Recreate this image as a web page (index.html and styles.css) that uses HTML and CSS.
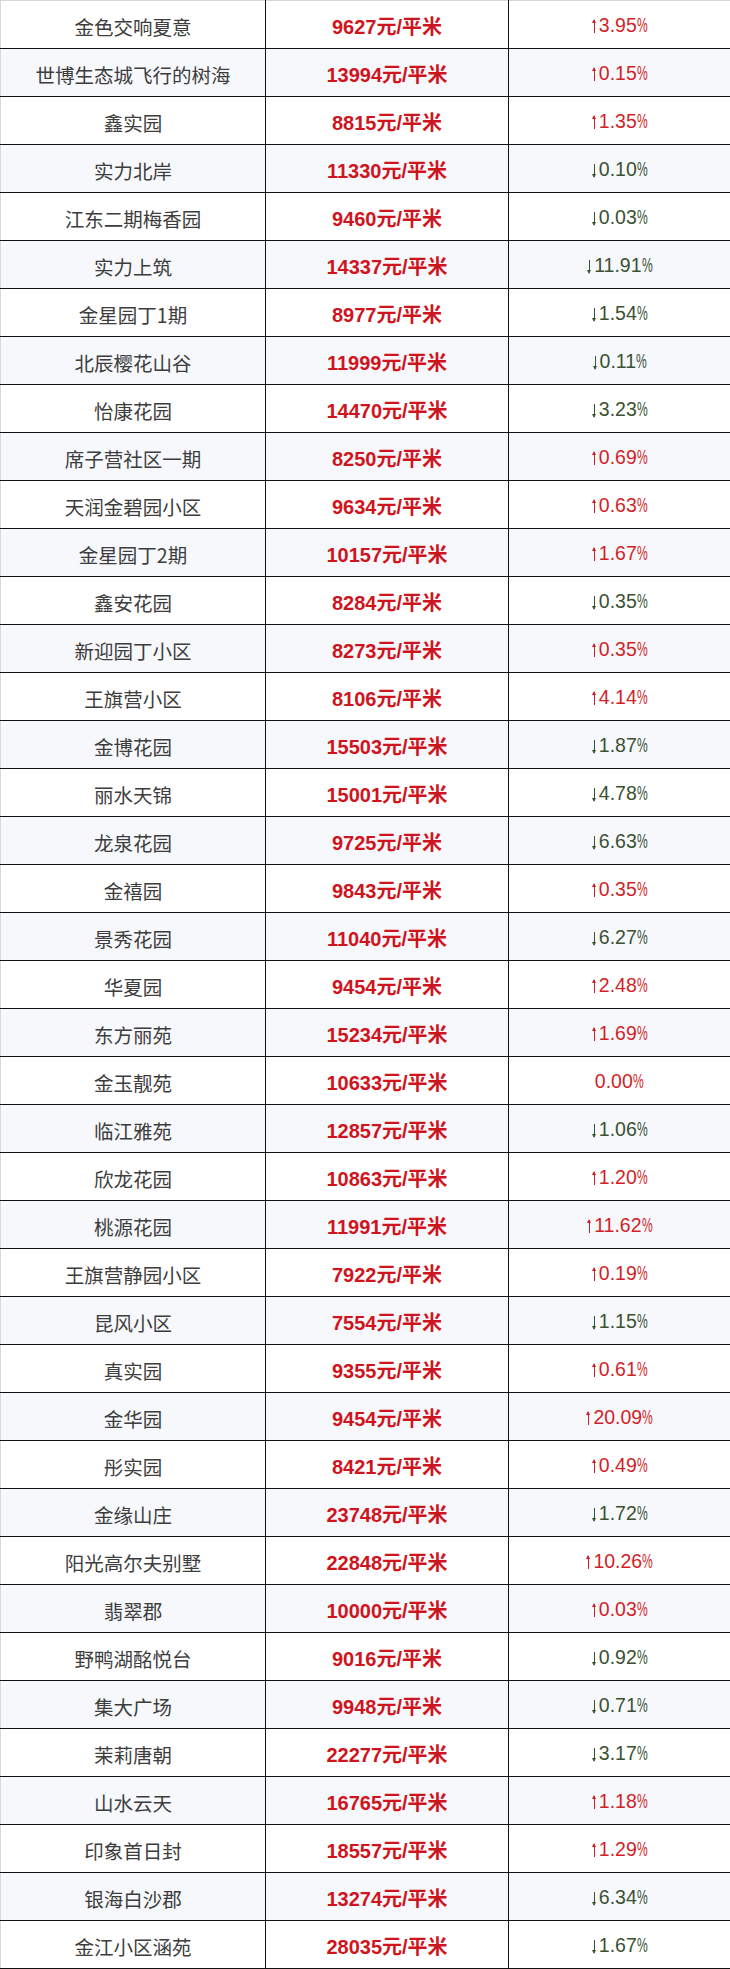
FILE: index.html
```html
<!DOCTYPE html>
<html lang="zh-CN">
<head>
<meta charset="utf-8">
<title>小区房价</title>
<link rel="stylesheet" href="styles.css">
</head>
<body>
<table class="prices">
<colgroup><col class="c-name"><col class="c-price"><col class="c-chg"></colgroup>
<tbody>
<tr><td class="name">金色交响夏意</td><td class="price">9627元/平米</td><td class="chg up"><i class="ar"></i>3.95<span class="pct">%</span></td></tr>
<tr><td class="name">世博生态城飞行的树海</td><td class="price">13994元/平米</td><td class="chg up"><i class="ar"></i>0.15<span class="pct">%</span></td></tr>
<tr><td class="name">鑫实园</td><td class="price">8815元/平米</td><td class="chg up"><i class="ar"></i>1.35<span class="pct">%</span></td></tr>
<tr><td class="name">实力北岸</td><td class="price">11330元/平米</td><td class="chg down"><i class="ar"></i>0.10<span class="pct">%</span></td></tr>
<tr><td class="name">江东二期梅香园</td><td class="price">9460元/平米</td><td class="chg down"><i class="ar"></i>0.03<span class="pct">%</span></td></tr>
<tr><td class="name">实力上筑</td><td class="price">14337元/平米</td><td class="chg down"><i class="ar"></i>11.91<span class="pct">%</span></td></tr>
<tr><td class="name">金星园丁1期</td><td class="price">8977元/平米</td><td class="chg down"><i class="ar"></i>1.54<span class="pct">%</span></td></tr>
<tr><td class="name">北辰樱花山谷</td><td class="price">11999元/平米</td><td class="chg down"><i class="ar"></i>0.11<span class="pct">%</span></td></tr>
<tr><td class="name">怡康花园</td><td class="price">14470元/平米</td><td class="chg down"><i class="ar"></i>3.23<span class="pct">%</span></td></tr>
<tr><td class="name">席子营社区一期</td><td class="price">8250元/平米</td><td class="chg up"><i class="ar"></i>0.69<span class="pct">%</span></td></tr>
<tr><td class="name">天润金碧园小区</td><td class="price">9634元/平米</td><td class="chg up"><i class="ar"></i>0.63<span class="pct">%</span></td></tr>
<tr><td class="name">金星园丁2期</td><td class="price">10157元/平米</td><td class="chg up"><i class="ar"></i>1.67<span class="pct">%</span></td></tr>
<tr><td class="name">鑫安花园</td><td class="price">8284元/平米</td><td class="chg down"><i class="ar"></i>0.35<span class="pct">%</span></td></tr>
<tr><td class="name">新迎园丁小区</td><td class="price">8273元/平米</td><td class="chg up"><i class="ar"></i>0.35<span class="pct">%</span></td></tr>
<tr><td class="name">王旗营小区</td><td class="price">8106元/平米</td><td class="chg up"><i class="ar"></i>4.14<span class="pct">%</span></td></tr>
<tr><td class="name">金博花园</td><td class="price">15503元/平米</td><td class="chg down"><i class="ar"></i>1.87<span class="pct">%</span></td></tr>
<tr><td class="name">丽水天锦</td><td class="price">15001元/平米</td><td class="chg down"><i class="ar"></i>4.78<span class="pct">%</span></td></tr>
<tr><td class="name">龙泉花园</td><td class="price">9725元/平米</td><td class="chg down"><i class="ar"></i>6.63<span class="pct">%</span></td></tr>
<tr><td class="name">金禧园</td><td class="price">9843元/平米</td><td class="chg up"><i class="ar"></i>0.35<span class="pct">%</span></td></tr>
<tr><td class="name">景秀花园</td><td class="price">11040元/平米</td><td class="chg down"><i class="ar"></i>6.27<span class="pct">%</span></td></tr>
<tr><td class="name">华夏园</td><td class="price">9454元/平米</td><td class="chg up"><i class="ar"></i>2.48<span class="pct">%</span></td></tr>
<tr><td class="name">东方丽苑</td><td class="price">15234元/平米</td><td class="chg up"><i class="ar"></i>1.69<span class="pct">%</span></td></tr>
<tr><td class="name">金玉靓苑</td><td class="price">10633元/平米</td><td class="chg flat">0.00<span class="pct">%</span></td></tr>
<tr><td class="name">临江雅苑</td><td class="price">12857元/平米</td><td class="chg down"><i class="ar"></i>1.06<span class="pct">%</span></td></tr>
<tr><td class="name">欣龙花园</td><td class="price">10863元/平米</td><td class="chg up"><i class="ar"></i>1.20<span class="pct">%</span></td></tr>
<tr><td class="name">桃源花园</td><td class="price">11991元/平米</td><td class="chg up"><i class="ar"></i>11.62<span class="pct">%</span></td></tr>
<tr><td class="name">王旗营静园小区</td><td class="price">7922元/平米</td><td class="chg up"><i class="ar"></i>0.19<span class="pct">%</span></td></tr>
<tr><td class="name">昆风小区</td><td class="price">7554元/平米</td><td class="chg down"><i class="ar"></i>1.15<span class="pct">%</span></td></tr>
<tr><td class="name">真实园</td><td class="price">9355元/平米</td><td class="chg up"><i class="ar"></i>0.61<span class="pct">%</span></td></tr>
<tr><td class="name">金华园</td><td class="price">9454元/平米</td><td class="chg up"><i class="ar"></i>20.09<span class="pct">%</span></td></tr>
<tr><td class="name">彤实园</td><td class="price">8421元/平米</td><td class="chg up"><i class="ar"></i>0.49<span class="pct">%</span></td></tr>
<tr><td class="name">金缘山庄</td><td class="price">23748元/平米</td><td class="chg down"><i class="ar"></i>1.72<span class="pct">%</span></td></tr>
<tr><td class="name">阳光高尔夫别墅</td><td class="price">22848元/平米</td><td class="chg up"><i class="ar"></i>10.26<span class="pct">%</span></td></tr>
<tr><td class="name">翡翠郡</td><td class="price">10000元/平米</td><td class="chg up"><i class="ar"></i>0.03<span class="pct">%</span></td></tr>
<tr><td class="name">野鸭湖酩悦台</td><td class="price">9016元/平米</td><td class="chg down"><i class="ar"></i>0.92<span class="pct">%</span></td></tr>
<tr><td class="name">集大广场</td><td class="price">9948元/平米</td><td class="chg down"><i class="ar"></i>0.71<span class="pct">%</span></td></tr>
<tr><td class="name">茉莉唐朝</td><td class="price">22277元/平米</td><td class="chg down"><i class="ar"></i>3.17<span class="pct">%</span></td></tr>
<tr><td class="name">山水云天</td><td class="price">16765元/平米</td><td class="chg up"><i class="ar"></i>1.18<span class="pct">%</span></td></tr>
<tr><td class="name">印象首日封</td><td class="price">18557元/平米</td><td class="chg up"><i class="ar"></i>1.29<span class="pct">%</span></td></tr>
<tr><td class="name">银海白沙郡</td><td class="price">13274元/平米</td><td class="chg down"><i class="ar"></i>6.34<span class="pct">%</span></td></tr>
<tr><td class="name">金江小区涵苑</td><td class="price">28035元/平米</td><td class="chg down"><i class="ar"></i>1.67<span class="pct">%</span></td></tr>
</tbody>
</table>
</body>
</html>
```
FILE: styles.css
```css
html, body {
  margin: 0;
  padding: 0;
  background: #ffffff;
}

.prices {
  width: 730px;
  table-layout: fixed;
  border-collapse: collapse;
  font-family: "Liberation Sans", "Noto Sans CJK SC", sans-serif;
}

.c-name { width: 265px; }
.c-price { width: 243px; }
.c-chg { width: 222px; }

.prices td {
  height: 47px;
  padding: 0;
  border: 1px solid #111111;
  text-align: center;
  vertical-align: middle;
  white-space: nowrap;
}

.prices tr:nth-child(even) td {
  background: #f6f8fc;
}

.prices tr:first-child td {
  border-top-color: #d6d6d6;
}

.prices td.name {
  border-left-color: #d9d9d9;
  font-family: "Noto Sans CJK SC", "Liberation Sans", sans-serif;
  font-size: 19.5px;
  color: #3d3d3d;
  padding-top: 3px;
  height: 44px;
}

.prices td.price {
  font-size: 20px;
  font-weight: bold;
  color: #d0141d;
  padding-top: 2px;
  height: 45px;
}

.prices td.chg {
  font-size: 19.5px;
  padding-top: 2px;
  height: 45px;
}

.chg.up, .chg.flat { color: #d21f28; }
.chg.down { color: #3b5131; }

.pct {
  display: inline-block;
  transform: scaleX(0.62);
  transform-origin: left center;
  margin-right: -6px;
}

.ar {
  display: inline-block;
  position: relative;
  width: 7px;
  height: 14px;
  margin-right: 1px;
  vertical-align: -1px;
}

.ar::before {
  content: "";
  position: absolute;
  left: 3px;
  top: 1px;
  width: 1px;
  height: 13px;
  background: currentColor;
}

.up .ar::after,
.down .ar::after {
  content: "";
  position: absolute;
  left: 1px;
  width: 0;
  height: 0;
  border-left: 2.5px solid transparent;
  border-right: 2.5px solid transparent;
}

.up .ar::after {
  top: 0;
  border-bottom: 4px solid currentColor;
}

.down .ar::after {
  bottom: -1px;
  border-top: 4px solid currentColor;
}
```
